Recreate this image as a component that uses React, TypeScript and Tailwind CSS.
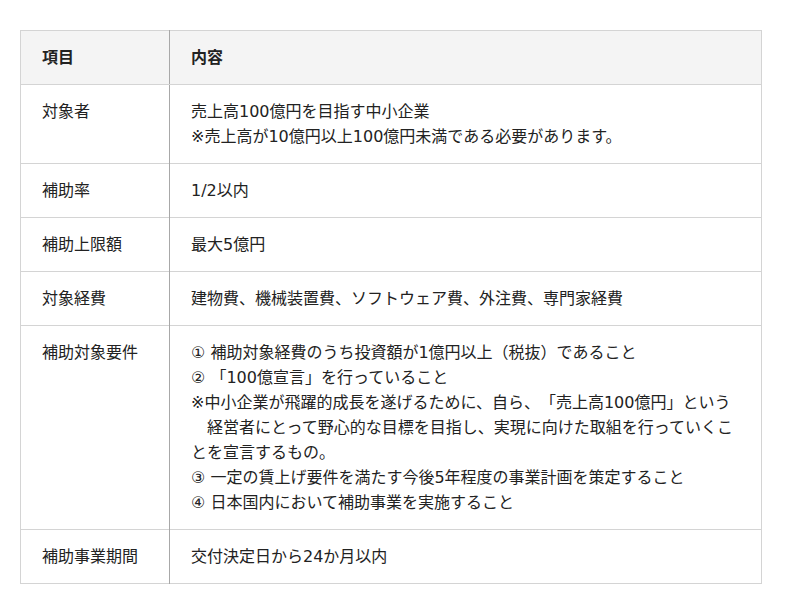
// 補助金の概要テーブル
const rows: { label: string; lines: string[] }[] = [
  { label: "対象者", lines: ["売上高100億円を目指す中小企業", "※売上高が10億円以上100億円未満である必要があります。"] },
  { label: "補助率", lines: ["1/2以内"] },
  { label: "補助上限額", lines: ["最大5億円"] },
  { label: "対象経費", lines: ["建物費、機械装置費、ソフトウェア費、外注費、専門家経費"] },
  {
    label: "補助対象要件",
    lines: [
      "① 補助対象経費のうち投資額が1億円以上（税抜）であること",
      "② 「100億宣言」を行っていること",
      "※中小企業が飛躍的成長を遂げるために、自ら、「売上高100億円」という",
      "　経営者にとって野心的な目標を目指し、実現に向けた取組を行っていくこ",
      "とを宣言するもの。",
      "③ 一定の賃上げ要件を満たす今後5年程度の事業計画を策定すること",
      "④ 日本国内において補助事業を実施すること",
    ],
  },
  { label: "補助事業期間", lines: ["交付決定日から24か月以内"] },
];

export default function App() {
  return (
    <div
      className="w-[800px] h-[614px] bg-white pt-[30px] pl-[20px] text-[16px] leading-[25px] text-[#222] [text-spacing-trim:space-all]"
      style={{ fontFamily: '"DejaVu Sans", "Noto Sans CJK JP", sans-serif' }}
    >
      <table className="w-[742px] border-collapse border border-[#d4d4d4]">
        <thead>
          <tr className="bg-[#f4f4f4]">
            <th className="w-[149px] h-[54px] px-[21px] text-left font-bold border-r border-[#a8a8a8] border-b border-b-[#d4d4d4]">項目</th>
            <th className="px-[21px] text-left font-bold border-b border-[#d4d4d4]">内容</th>
          </tr>
        </thead>
        <tbody>
          {rows.map((r) => (
            <tr key={r.label} className="border-b border-[#d4d4d4]">
              <td className="align-top px-[21px] py-[14px] border-r border-[#a8a8a8]">{r.label}</td>
              <td className="align-top px-[21px] py-[14px] whitespace-pre">
                {r.lines.map((l, i) => (
                  <div key={i}>{l}</div>
                ))}
              </td>
            </tr>
          ))}
        </tbody>
      </table>
    </div>
  );
}
